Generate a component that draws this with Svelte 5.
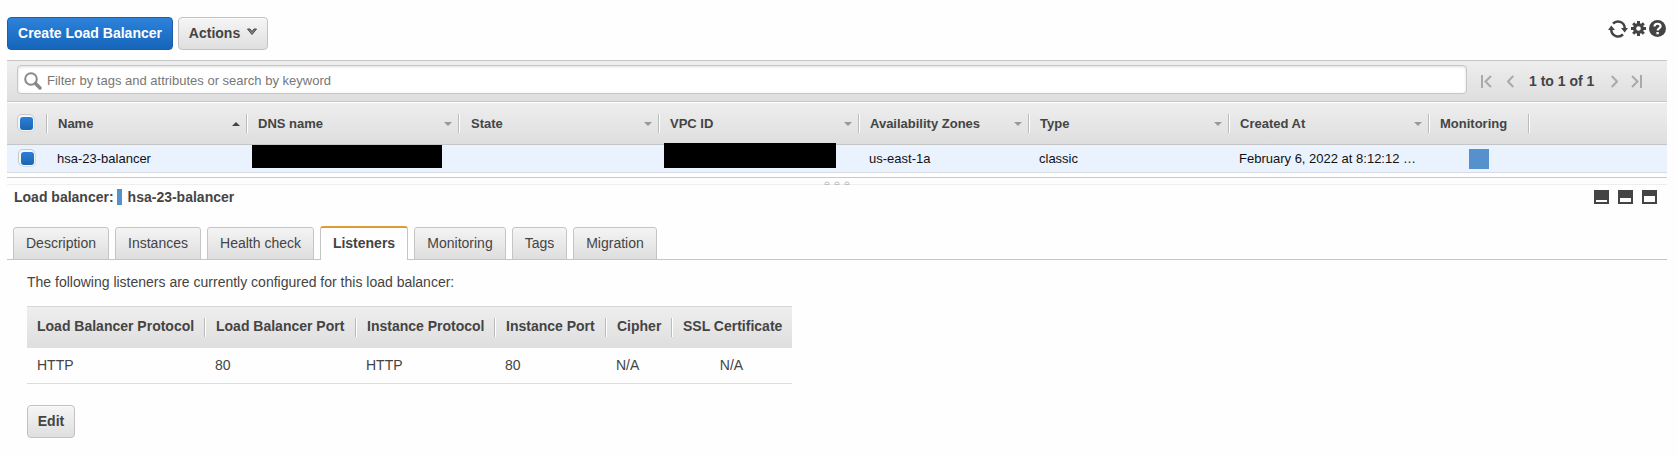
<script>
  const columns = [
    { label: 'Name', sort: 'up' },
    { label: 'DNS name', sort: 'down' },
    { label: 'State', sort: 'down' },
    { label: 'VPC ID', sort: 'down' },
    { label: 'Availability Zones', sort: 'down' },
    { label: 'Type', sort: 'down' },
    { label: 'Created At', sort: 'down' },
    { label: 'Monitoring', sort: '' },
    { label: '', sort: '' }
  ];
  const tabs = ['Description', 'Instances', 'Health check', 'Listeners', 'Monitoring', 'Tags', 'Migration'];
  const widths = [96, 86, 107, 88, 92, 55, 84];
  let active = $state('Listeners');
  const listenerColumns = ['Load Balancer Protocol', 'Load Balancer Port', 'Instance Protocol', 'Instance Port', 'Cipher', 'SSL Certificate'];
  const listener = ['HTTP', '80', 'HTTP', '80', 'N/A', 'N/A'];
</script>

<div class="page">
  <header class="actions">
    <button class="btn primary"><span>Create Load Balancer</span></button>
    <button class="btn menu"><span>Actions</span>
      <svg width="10" height="8" viewBox="0 0 10 8"><path d="M.5 1H3L5 3.6L7 1H9.5L5 6.5Z" fill="#888" stroke="#444" stroke-width="1" /></svg>
    </button>
    <div class="tools">
      <svg width="20" height="18" viewBox="0 0 20 18">
        <path d="M5 3.6C8.5 -.2 16.8 1 16.8 9M15 14.4C11.5 18.2 3.2 17 3.2 9" fill="none" stroke="#444" stroke-width="2.5" />
        <path d="M13 8H20L16.7 12.6ZM0 10H7L3.3 5.4Z" fill="#444" />
      </svg>
      <svg class="gear" width="15" height="15" viewBox="0 0 15 15">
        <g fill="#444">
          <path d="M6 0h3v15H6z" /><path d="M6 0h3v15H6z" transform="rotate(45 7.5 7.5)" />
          <path d="M6 0h3v15H6z" transform="rotate(90 7.5 7.5)" /><path d="M6 0h3v15H6z" transform="rotate(135 7.5 7.5)" />
          <circle cx="7.5" cy="7.5" r="5.4" />
        </g>
        <circle cx="7.5" cy="7.5" r="2.3" fill="#fff" />
      </svg>
      <svg width="17" height="17" viewBox="0 0 17 17">
        <circle cx="8.5" cy="8.5" r="8.5" fill="#444" />
        <path d="M5.5 6.6C5.5 2.8 11.6 2.9 11.6 6.2C11.6 8.4 8.6 8.2 8.6 10.6" fill="none" stroke="#fff" stroke-width="2.2" />
        <path d="M7.4 12h2.4v2.3H7.4z" fill="#fff" />
      </svg>
    </div>
  </header>

  <div class="toolbar">
    <div class="search">
      <svg width="18" height="18" viewBox="0 0 18 18"><circle cx="7" cy="7" r="5.8" fill="none" stroke="#888" stroke-width="2" /><path d="M11.5 11.5L16 16" stroke="#888" stroke-width="3.4" stroke-linecap="round" /></svg>
      <span>Filter by tags and attributes or search by keyword</span>
    </div>
    <div class="pager">
      <svg width="11" height="13" viewBox="0 0 11 13"><path d="M1 0V13M10 1L4.5 6.5L10 12" /></svg>
      <svg width="7" height="13" viewBox="0 0 7 13"><path d="M6.3 1L1 6.5L6.3 12" /></svg>
      <b>1 to 1 of 1</b>
      <svg width="7" height="13" viewBox="0 0 7 13"><path d="M.7 1L6 6.5L.7 12" /></svg>
      <svg width="11" height="13" viewBox="0 0 11 13"><path d="M10 0V13M1 1L6.5 6.5L1 12" /></svg>
    </div>
  </div>

  <div class="grid head">
    <div class="pick"><i class="check"></i></div>
    {#each columns as c}
      <div class="col"><span>{c.label}</span>
        {#if c.sort}<i class={c.sort}></i>{/if}
      </div>
    {/each}
  </div>
  <div class="grid row">
    <div class="pick"><i class="check"></i></div>
    <div class="cell"><span>hsa-23-balancer</span></div>
    <div class="cell"><i class="mask dns"></i></div>
    <div class="cell"></div>
    <div class="cell"><i class="mask vpc"></i></div>
    <div class="cell"><span>us-east-1a</span></div>
    <div class="cell"><span>classic</span></div>
    <div class="cell"><span>February 6, 2022 at 8:12:12 …</span></div>
    <div class="cell"><i class="monitor"></i></div>
    <div class="cell"></div>
  </div>

  <div class="splitter">
    <svg width="26" height="5" viewBox="0 0 26 5" fill="none" stroke="#bbb"><path d="M1 4V2.5Q1 1 3 1T5 2.5V4M11 4V2.5Q11 1 13 1T15 2.5V4M21 4V2.5Q21 1 23 1T25 2.5V4M1.5 3.5H4.5M11.5 3.5H14.5M21.5 3.5H24.5" /></svg>
  </div>

  <div class="title">
    <b>Load balancer:</b><i class="bar"></i><b>hsa-23-balancer</b>
    <div class="panes">
      <i style:--h="2px"></i><i style:--h="4px"></i><i style:--h="6px"></i>
    </div>
  </div>

  <nav>
    {#each tabs as t, n}
      <button class="tab" class:active={t === active} style:width="{widths[n]}px" onclick={() => (active = t)}>{t}</button>
    {/each}
  </nav>

  <section>
    <p>The following listeners are currently configured for this load balancer:</p>
    <div class="table thead">
      {#each listenerColumns as l}<div>{l}</div>{/each}
    </div>
    <div class="table tbody">
      {#each listener as v}<div>{v}</div>{/each}
    </div>
    <button class="btn edit">Edit</button>
  </section>
</div>

<style>
  :global(body) { background: #fefefe; }
  * { box-sizing: border-box; }
  .page { width: 1677px; height: 457px; padding: 17px 10px 0 7px; overflow: hidden; font: 14px/16px "Liberation Sans", Arial, sans-serif; color: #444; }
  svg, i { display: block; flex: none; }
  span, b { white-space: nowrap; }
  button { font: inherit; color: inherit; margin: 0; padding: 0; }
  .actions { display: flex; height: 43px; align-items: flex-start; gap: 5px; }
  .btn { height: 33px; padding-bottom: 2px; border: 1px solid #c2c2c2; border-radius: 4px; background: linear-gradient(#f5f5f5, #dfdfdf); font-weight: bold; box-shadow: inset 0 1px 0 #fafafa; display: flex; align-items: center; justify-content: center; }
  .btn.primary { width: 166px; color: #fff; border-color: #1a5fae; background: linear-gradient(#2d82da, #1565ba); box-shadow: none; }
  .menu { width: 90px; gap: 7px; }
  .menu svg { margin-top: -1px; }
  .tools { margin: 3px 1px 0 auto; display: flex; gap: 3px; align-items: flex-start; }
  .gear { margin-top: 1px; }
  .toolbar { height: 42px; border-top: 1px solid #c4c4c4; border-bottom: 1px solid #c8c8c8; background: linear-gradient(#eee, #dedede); display: flex; padding: 4px 0 0 10px; }
  .search { width: 1450px; height: 29px; border: 1px solid #c6c6c6; border-radius: 4px; background: #fff; box-shadow: inset 0 1px 3px #ddd; display: flex; align-items: center; gap: 5px; padding-left: 6px; font-size: 13px; color: #777; }
  .search span { margin-top: 2px; }
  .search svg { margin-top: 3px; }
  .pager { display: flex; align-items: center; height: 33px; margin-left: 14px; }
  .pager svg { fill: none; stroke: #aaa; stroke-width: 2; }
  .pager svg:nth-child(2) { margin-left: 15px; }
  .pager b { width: 65px; margin: -2px 17px 0 15px; }
  .pager svg:last-child { margin-left: 13px; }
  .grid { display: grid; grid-template-columns: 39px 200px 212px 200px 200px 170px 200px 200px 100px 1fr; font-size: 13px; }
  .head { height: 43px; border-top: 1px solid #fff; border-bottom: 1px solid #c5c5c5; background: linear-gradient(#eee, #dedede); font-weight: bold; align-items: center; }
  .col { height: 19px; border-left: 1px solid #bbb; box-shadow: inset 1px 0 #fff; display: flex; align-items: center; padding: 0 6px 0 11px; justify-content: space-between; }
  .col:nth-child(4) { padding-left: 12px; }
  .up { border: 4px solid transparent; border-bottom-color: #444; border-top: 0; }
  .down { border: 4px solid transparent; border-top-color: #999; border-bottom: 0; margin-top: 1px; }
  .pick { padding-left: 13px; }
  .check { width: 13px; height: 13px; border-radius: 3px; background: linear-gradient(#2b7fd8, #1c65b0); box-shadow: 0 0 0 1px #f3f7fa, -1px -1px 0 1px #f3f7fa, -1px -1px 0 2px #c4cace, 0 0 0 2px #d4dade; }
  .row { height: 28px; background: #eaf2fe; border-bottom: 1px solid #d8dce2; color: #111; }
  .row .pick { padding: 7px 0 0 14px; }
  .cell { padding-left: 11px; display: flex; align-items: flex-start; }
  .cell span { margin-top: 6px; }
  .mask { background: #000; }
  .dns { width: 190px; height: 23px; margin-left: -5px; }
  .vpc { width: 172px; height: 25px; margin: -2px 0 0 -5px; }
  .monitor { width: 20px; height: 20px; margin: 4px 0 0 30px; background: #5592cd; }
  .splitter { margin-top: 4px; height: 8px; border-top: 1px solid #c9c9c9; border-bottom: 1px solid #eee; }
  .splitter svg { margin: 3px 0 0 817px; }
  .title { height: 41px; display: flex; padding: 4px 10px 0 7px; align-items: flex-start; }
  .bar { width: 5px; height: 16px; background: #5592cd; margin: 0 6px 0 3px; }
  .panes { margin: 1px 0 0 auto; display: flex; gap: 9px; }
  .panes i { width: 15px; height: 14px; background: #444; display: flex; align-items: flex-end; padding: 2px; }
  .panes i::after { content: ''; width: 100%; height: var(--h); background: #fff; }
  nav { display: flex; height: 34px; align-items: flex-end; gap: 6px; padding-left: 6px; box-shadow: inset 0 -1px #c5c5c5; }
  .tab { height: 33px; padding-bottom: 2px; border: 1px solid #c5c5c5; border-radius: 3px 3px 0 0; background: linear-gradient(#f4f4f4, #dedede); }
  .tab.active { height: 34px; background: #fefefe; border-top: 2px solid #dd9a35; border-bottom: 0; font-weight: bold; }
  section { padding: 14px 0 0 20px; }
  p { margin: 0 0 16px; height: 16px; }
  .table { width: 765px; display: grid; grid-template-columns: 177px 151px 139px 111px 66px 121px; align-items: center; }
  .thead { height: 42px; border-top: 1px solid #d8d8d8; background: linear-gradient(#eee, #dedede); font-weight: bold; }
  .thead div { height: 19px; line-height: 17px; padding-left: 11px; white-space: nowrap; border-left: 1px solid #bbb; box-shadow: inset 1px 0 #fff; }
  .thead div:first-child { border: 0; box-shadow: none; padding-left: 10px; }
  .tbody { height: 36px; padding-bottom: 2px; border-bottom: 1px solid #ddd; }
  .tbody div { padding-left: 11px; }
  .tbody div:first-child { padding-left: 10px; }
  .tbody div:last-child { text-align: center; padding: 0; }
  .edit { width: 48px; margin-top: 21px; }
</style>
